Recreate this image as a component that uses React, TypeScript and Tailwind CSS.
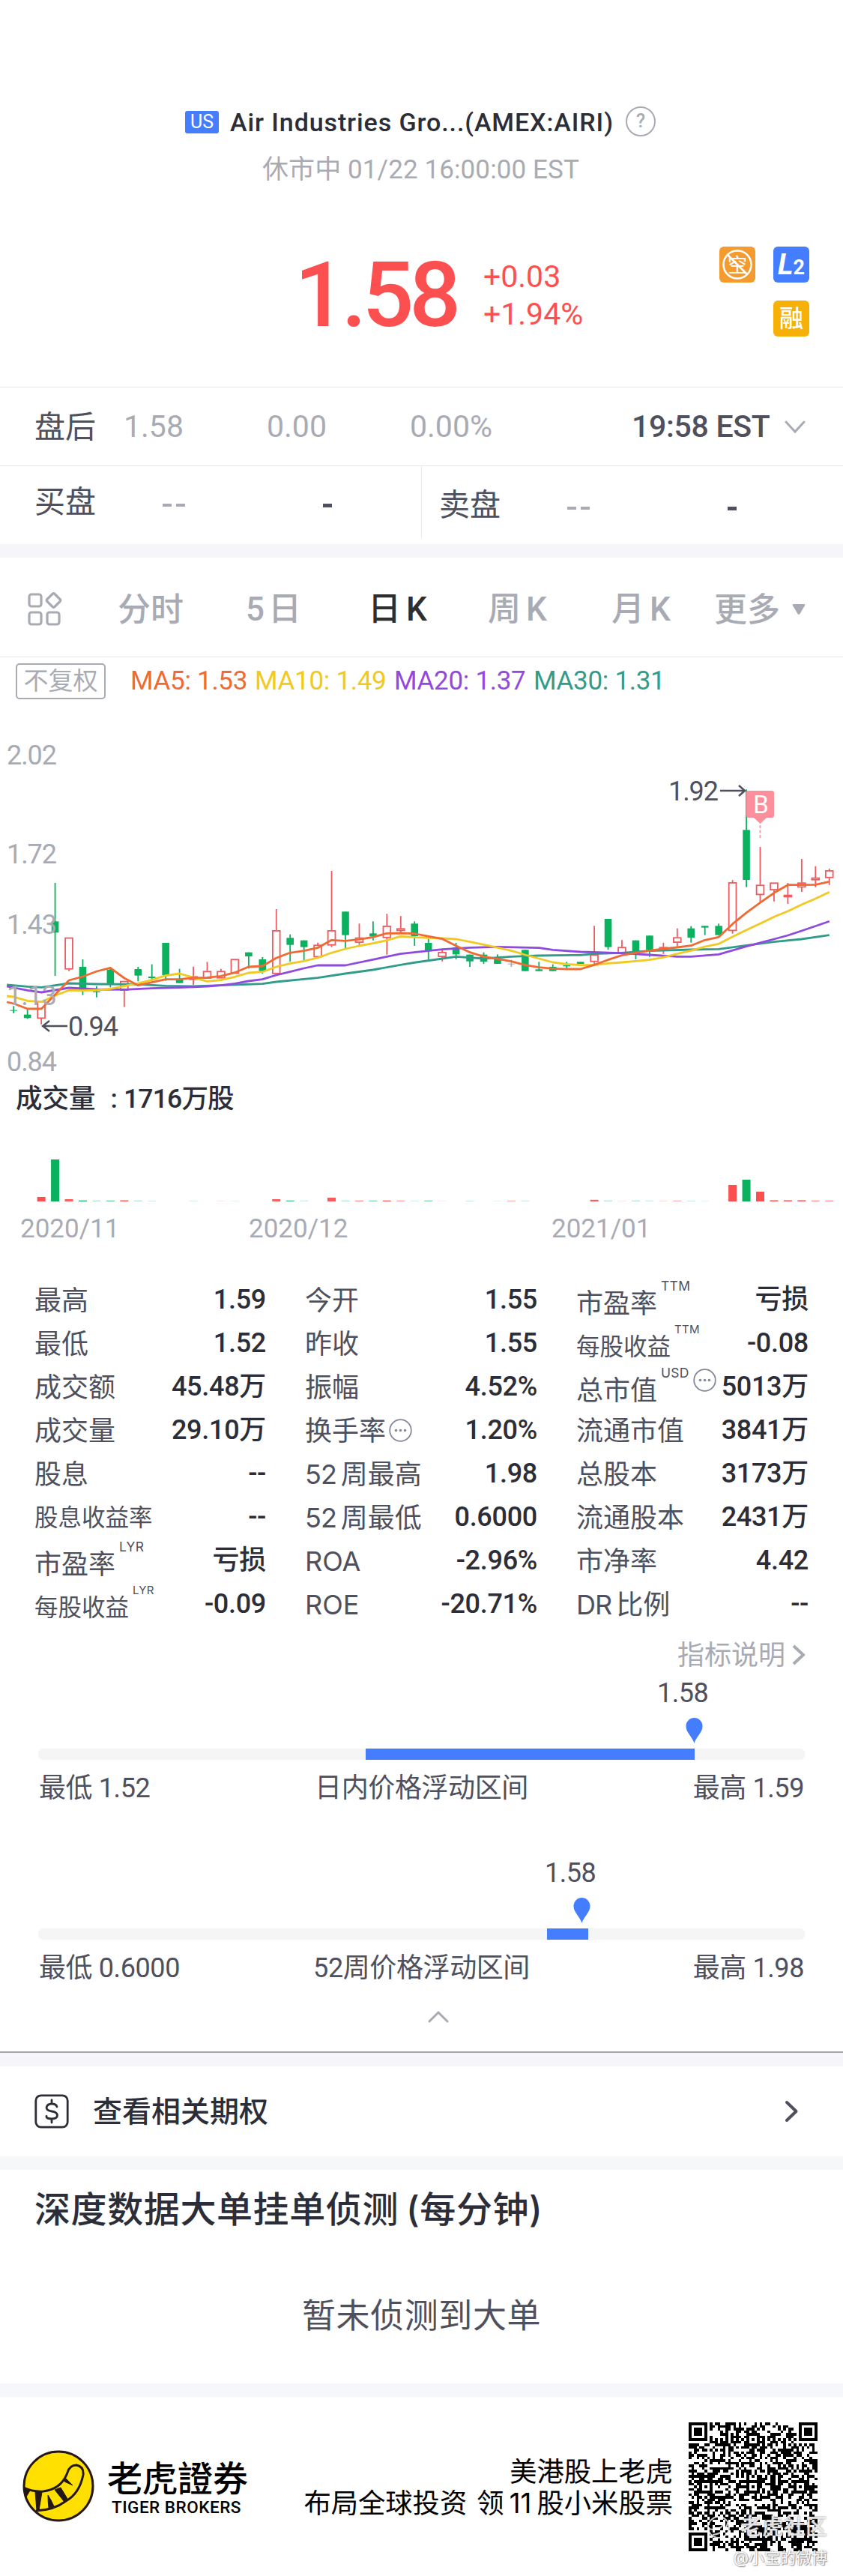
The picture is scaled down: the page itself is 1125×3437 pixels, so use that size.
import React from "react";

const DIN = "font-['Roboto','Noto_Sans_CJK_SC',sans-serif]";

/* ---------- price chart ---------- */

type Kind = "g" | "r" | "x";
// kind, body top, body bottom, wick top, wick bottom (thirds of a pixel)
type Candle = [Kind, number, number, number, number];

const candles: Candle[] = [
  ["g", 1163, 1166, 1147, 1176], ["g", 1181, 1195, 1160, 1198], ["r", 1128, 1197, 1128, 1220],
  ["g", 808, 853, 654, 1026], ["r", 873, 1000, 873, 1007], ["g", 990, 1086, 960, 1103],
  ["g", 1088, 1092, 1067, 1112], ["g", 1001, 1058, 992, 1072], ["r", 1047, 1085, 1047, 1151],
  ["g", 999, 1025, 990, 1048], ["g", 1029, 1035, 980, 1048], ["g", 894, 1023, 894, 1046],
  ["g", 1041, 1055, 998, 1055], ["r", 1028, 1042, 989, 1063], ["r", 1007, 1037, 970, 1037],
  ["r", 1007, 1036, 998, 1036], ["r", 959, 1017, 959, 1017], ["g", 932, 948, 932, 997],
  ["g", 960, 1007, 951, 1017], ["r", 844, 1018, 759, 1018], ["g", 874, 902, 860, 969],
  ["g", 884, 911, 884, 965], ["r", 902, 951, 893, 951], ["r", 844, 904, 606, 911],
  ["g", 769, 863, 769, 915], ["r", 873, 893, 817, 902], ["g", 856, 868, 808, 884],
  ["r", 826, 874, 778, 941], ["r", 836, 846, 787, 855], ["g", 817, 867, 808, 906],
  ["g", 894, 925, 878, 960], ["r", 931, 950, 920, 968], ["g", 912, 940, 894, 960],
  ["g", 941, 968, 941, 990], ["g", 941, 969, 932, 978], ["g", 955, 978, 940, 978],
  ["x", 977, 980, 962, 990], ["g", 922, 1007, 922, 1007], ["g", 1000, 1007, 970, 1007],
  ["g", 990, 1007, 980, 1007], ["g", 983, 988, 970, 995], ["g", 970, 978, 970, 978],
  ["r", 941, 970, 826, 980], ["g", 798, 911, 798, 921], ["r", 911, 935, 883, 935],
  ["g", 884, 930, 884, 960], ["g", 865, 922, 865, 950], ["r", 911, 918, 893, 938],
  ["r", 872, 893, 836, 908], ["g", 836, 873, 827, 893], ["g", 826, 833, 826, 863],
  ["g", 826, 863, 817, 863], ["r", 652, 846, 643, 857], ["g", 442, 642, 280, 671],
  ["r", 662, 702, 510, 730], ["r", 653, 683, 653, 728], ["r", 702, 711, 654, 738],
  ["r", 653, 672, 558, 690], ["r", 633, 643, 587, 671], ["r", 604, 634, 597, 662],
];

const cx = (i: number) => 18.2 + 18.45 * i;
const KX = 2.751;

const line = (left: number[], right: number[]) => {
  const out: string[] = [];
  for (let i = 0; i < left.length; i += 2) out.push(`${(left[i] / KX).toFixed(1)},${(left[i + 1] / 3).toFixed(1)}`);
  for (let i = 0; i < right.length; i += 2) out.push(`${(555 + right[i] / KX).toFixed(1)},${(right[i + 1] / 3).toFixed(1)}`);
  return out.join(" ");
};

const ma30 = line(
  [25, 1062, 101, 1069, 152, 1072, 253, 1056, 355, 1059, 507, 1060, 608, 1066, 710, 1068, 811, 1064, 963, 1058, 1014, 1050, 1166, 1034, 1268, 1017, 1369, 1002, 1470, 982],
  [0, 972, 97, 957, 148, 949, 249, 957, 350, 949, 452, 945, 604, 943, 655, 938, 756, 934, 858, 926, 1010, 921, 1112, 919, 1214, 904, 1315, 890, 1416, 879, 1518, 863],
);
const ma20 = line(
  [25, 1068, 101, 1084, 152, 1092, 203, 1083, 253, 1074, 355, 1080, 456, 1081, 558, 1076, 659, 1073, 760, 1068, 811, 1064, 862, 1057, 912, 1047, 963, 1040, 1014, 1023, 1064, 1010, 1115, 996, 1166, 984, 1268, 984, 1369, 961, 1470, 938],
  [0, 931, 97, 920, 199, 913, 300, 910, 452, 914, 503, 922, 604, 930, 756, 935, 858, 942, 959, 949, 1010, 949, 1112, 940, 1214, 908, 1315, 879, 1366, 864, 1416, 846, 1518, 808],
);
const ma10 = line(
  [25, 1107, 50, 1110, 101, 1126, 152, 1130, 203, 1105, 253, 1084, 304, 1085, 355, 1083, 405, 1078, 456, 1067, 507, 1056, 558, 1042, 608, 1025, 659, 1017, 710, 1033, 760, 1048, 811, 1043, 862, 1030, 912, 1014, 963, 1010, 1014, 990, 1064, 977, 1115, 967, 1166, 954, 1217, 934, 1268, 918, 1318, 906, 1369, 896, 1420, 884, 1470, 868, 1521, 871],
  [0, 872, 97, 876, 148, 879, 199, 890, 249, 901, 300, 913, 350, 925, 401, 942, 452, 957, 503, 972, 553, 979, 604, 983, 655, 983, 705, 976, 756, 972, 807, 967, 858, 962, 908, 952, 959, 938, 1010, 925, 1061, 909, 1112, 898, 1163, 869, 1214, 842, 1264, 817, 1315, 790, 1366, 767, 1416, 741, 1467, 717, 1518, 691],
);
const ma5 = line(
  [25, 1131, 50, 1137, 101, 1158, 152, 1158, 203, 1100, 253, 1044, 304, 1029, 355, 1008, 405, 994, 456, 1035, 507, 1064, 558, 1052, 608, 1040, 659, 1040, 710, 1034, 760, 1033, 811, 1027, 862, 1013, 912, 990, 963, 987, 1014, 955, 1064, 934, 1115, 926, 1166, 914, 1217, 883, 1268, 886, 1318, 880, 1369, 871, 1420, 856, 1470, 855, 1521, 857],
  [0, 858, 47, 868, 97, 878, 148, 906, 199, 932, 249, 949, 300, 958, 350, 968, 401, 983, 452, 992, 503, 997, 553, 999, 604, 999, 655, 982, 705, 962, 756, 944, 807, 934, 858, 925, 908, 918, 959, 912, 1010, 905, 1061, 883, 1112, 871, 1163, 818, 1214, 773, 1264, 733, 1315, 694, 1366, 662, 1416, 662, 1467, 661, 1518, 649],
);

const axis: [string, number][] = [["2.02", 60], ["1.72", 192], ["1.43", 286], ["1.13", 381], ["0.84", 469]];

function PriceChart() {
  return (
    <svg className="block" width="1125" height="480" viewBox="0 0 1125 480">
      {candles.map(([k, t, b, wt, wb], i) => {
        const x = cx(i);
        const top = t / 3;
        const bot = b / 3;
        if (k === "r") {
          return (
            <g key={i} stroke="#ef5b60" strokeWidth="1.8" fill="none">
              <path d={`M${x} ${wt / 3}V${top}M${x} ${bot}V${wb / 3}`} />
              <rect x={x - 4.9} y={top + 0.6} width="9.8" height={Math.max(bot - top - 1.2, 1.5)} />
            </g>
          );
        }
        const c = k === "g" ? "#0ab15f" : "#a9abb4";
        return (
          <g key={i} fill={c}>
            <rect x={x - 0.9} y={wt / 3} width="1.8" height={(wb - wt) / 3} />
            <rect x={x - 4.8} y={top} width="9.6" height={bot - top} />
          </g>
        );
      })}
      <g fill="none" strokeWidth="2.8" strokeLinejoin="round">
        <polyline points={ma30} stroke="#329c8b" />
        <polyline points={ma20} stroke="#8f4be0" />
        <polyline points={ma10} stroke="#f1c921" />
        <polyline points={ma5} stroke="#f06a33" />
      </g>
      <g className={DIN} fontSize="36" fill="#a9abb4">
        {axis.map(([t, y]) => (
          <text key={t} x="9" y={y} textLength="67">{t}</text>
        ))}
      </g>
      <g className={DIN} fontSize="36" fill="#4e505d">
        <text x="91" y="422" textLength="67">0.94</text>
        <text x="892" y="108" textLength="67">1.92</text>
      </g>
      <g fill="none" stroke="#4e505d" strokeWidth="2.4">
        <path d="M90 409H57M66 402L57 409L66 416" />
        <path d="M961 95H994M986 88L994 95L986 102" />
      </g>
      <path d="M1000 95h30q3 0 3 3v30q0 3-3 3h-7l-8.500 8l-8.500-8h-7q-3 0-3-3v-30q0-3 3-3z" fill="#fd8e9c" />
      <text x="1015.500" y="124.500" textAnchor="middle" className={DIN} fontSize="33" fill="#fff">B</text>
      <path d="M1014.500 141V158" stroke="#f3a5ae" strokeWidth="2" strokeDasharray="4 2.500" />
    </svg>
  );
}

/* ---------- volume ---------- */

const volumes: [number, Kind, number, number][] = [
  [2, "r", 6, 1], [3, "g", 56, 1], [4, "r", 3, 0.9], [5, "g", 1.3, 0.9], [6, "g", 1.3, 0.3], [7, "g", 1.3, 0.6],
  [8, "r", 1.5, 0.9], [9, "g", 1.3, 0.3], [10, "g", 0.7, 0.3], [13, "g", 1.3, 0.15], [15, "r", 1, 0.12], [16, "g", 1, 0.12],
  [19, "r", 3, 0.9], [20, "g", 1.3, 0.7], [21, "g", 1.3, 0.2], [23, "r", 5, 0.95], [24, "g", 1.3, 0.3], [25, "r", 1.3, 0.6],
  [26, "g", 1.3, 0.5], [27, "r", 1.3, 0.9], [28, "r", 1.3, 0.5], [29, "g", 1, 0.2], [30, "g", 1.3, 0.5], [31, "r", 1, 0.1],
  [33, "g", 1, 0.25], [35, "g", 1, 0.12], [36, "r", 1.3, 0.4], [37, "g", 1.3, 0.2], [42, "r", 2.2, 0.9], [43, "g", 1.3, 0.3],
  [44, "r", 1, 0.15], [45, "g", 1.3, 0.3], [46, "g", 1.3, 0.2], [47, "r", 1, 0.2], [48, "r", 1.3, 0.4], [49, "g", 1, 0.25],
  [50, "g", 1, 0.1], [52, "r", 22, 1], [53, "g", 29, 1], [54, "r", 13, 1], [55, "r", 1.6, 0.9], [56, "r", 1.6, 0.9],
  [57, "r", 1.6, 0.9], [58, "r", 1.3, 0.6], [59, "r", 1.3, 0.6],
];

function VolumeChart() {
  return (
    <svg className="block" width="1125" height="113" viewBox="0 0 1125 113">
      {volumes.map(([i, k, h, o]) => (
        <rect key={i} x={cx(i) - 5.5} y={113 - h} width="11" height={h} fill={k === "g" ? "#0ab15f" : "#fb4f50"} opacity={o} />
      ))}
    </svg>
  );
}

/* ---------- QR code ---------- */

function QrCode() {
  const n = 49;
  let seed = 20210122;
  const rnd = () => {
    seed = (Math.imul(seed, 1103515245) + 12345) & 0x7fffffff;
    return (seed >> 12) / (0x7fffffff >> 12);
  };
  const ring = (dx: number, dy: number) => Math.max(Math.abs(dx), Math.abs(dy));
  const finders = [[3, 3], [n - 4, 3], [3, n - 4]];
  const aligns = [[24, 6], [6, 24], [24, 24], [42, 24], [24, 42], [42, 42]];
  let d = "";
  for (let y = 0; y < n; y++) {
    for (let x = 0; x < n; x++) {
      let on = rnd() < 0.52;
      if (x === 6 || y === 6) on = (x + y) % 2 === 0;
      for (const [ax, ay] of aligns) {
        const r = ring(x - ax, y - ay);
        if (r <= 2) on = r !== 1;
      }
      for (const [fx, fy] of finders) {
        const r = ring(x - fx, y - fy);
        if (r <= 4) on = r === 3 || r <= 1;
      }
      if (on) d += `M${x} ${y}h1v1h-1z`;
    }
  }
  return (
    <svg className="block" width="172" height="172" viewBox="0 0 49 49" shapeRendering="crispEdges">
      <path d={d} fill="#000" />
    </svg>
  );
}

/* ---------- table ---------- */

function Dots() {
  return (
    <svg width="31" height="31" viewBox="0 0 31 31" className="shrink-0">
      <circle cx="15.500" cy="15.500" r="14.300" fill="none" stroke="#85889a" strokeWidth="1.800" />
      <circle cx="9.500" cy="15.500" r="1.800" fill="#85889a" />
      <circle cx="15.500" cy="15.500" r="1.800" fill="#85889a" />
      <circle cx="21.500" cy="15.500" r="1.800" fill="#85889a" />
    </svg>
  );
}

type Cell = { l: string; v: string; sup?: string; small?: boolean; dots?: boolean };

const columns: Cell[][] = [
  [
    { l: "最高", v: "1.59" }, { l: "最低", v: "1.52" }, { l: "成交额", v: "45.48万" }, { l: "成交量", v: "29.10万" },
    { l: "股息", v: "--" }, { l: "股息收益率", v: "--", small: true }, { l: "市盈率", v: "亏损", sup: "LYR" },
    { l: "每股收益", v: "-0.09", sup: "LYR", small: true },
  ],
  [
    { l: "今开", v: "1.55" }, { l: "昨收", v: "1.55" }, { l: "振幅", v: "4.52%" }, { l: "换手率", v: "1.20%", dots: true },
    { l: "52周最高", v: "1.98" }, { l: "52周最低", v: "0.6000" }, { l: "ROA", v: "-2.96%" }, { l: "ROE", v: "-20.71%" },
  ],
  [
    { l: "市盈率", v: "亏损", sup: "TTM" }, { l: "每股收益", v: "-0.08", sup: "TTM", small: true },
    { l: "总市值", v: "5013万", sup: "USD", dots: true }, { l: "流通市值", v: "3841万" }, { l: "总股本", v: "3173万" },
    { l: "流通股本", v: "2431万" }, { l: "市净率", v: "4.42" }, { l: "DR比例", v: "--" },
  ],
];

function Label({ l }: { l: string }) {
  const m = l.match(/^([A-Z0-9]+)(.+)$/);
  if (m && /[^A-Z]/.test(m[2])) {
    return (
      <>
        <span className="tracking-[-1px]">{m[1]}</span>
        <span className="ml-[6px]">{m[2]}</span>
      </>
    );
  }
  return <>{l}</>;
}

function Row({ c }: { c: Cell }) {
  return (
    <div className="flex h-[58px] items-center justify-between">
      <div className="flex items-center whitespace-nowrap text-[#4e505d]">
        <span
          className={
            (c.small ? "text-[31.500px]" : "text-[36px]") +
            (c.sup ? " relative top-[5px]" : " relative top-px") +
            " -ml-px leading-[50px]"
          }
        >
          <Label l={c.l} />
        </span>
        {c.sup && (
          <span className={(c.small ? "text-[15px]" : "text-[17.500px]") + " relative -top-[18px] ml-[5px] w-[37px] leading-[20px] tracking-[0.3px]"}>
            {c.sup}
          </span>
        )}
        {c.dots && (
          <span className={c.sup ? "relative -top-[9px] ml-[6px]" : "ml-[4px]"}>
            <Dots />
          </span>
        )}
      </div>
      <span className={DIN + " whitespace-nowrap text-[36px] font-medium leading-[50px] tracking-[-0.3px] text-[#2b2d38]"}>{c.v}</span>
    </div>
  );
}

/* ---------- price range ---------- */

function Range(p: { low: string; name: string; high: string; from: number; to: number; pin: number; label: number }) {
  return (
    <div className="px-[51px]">
      <div className="flex h-[40px] items-center">
        <span className={DIN + " text-[36px] leading-[40px] tracking-[-0.5px]"} style={{ marginLeft: p.label - 54 }}>1.58</span>
      </div>
      <svg className="mt-[13px] block" width="23" height="34" viewBox="0 0 23 34" style={{ marginLeft: p.pin - 62.5 }}>
        <path d="M11.500 34C9 25 0.500 20 0.500 11A11 11 0 0 1 22.500 11C22.500 20 14 25 11.500 34Z" fill="#447dfd" />
      </svg>
      <div className="mt-[7px] h-[15px] overflow-hidden rounded-[6px] bg-[#f5f5f5]">
        <div className="h-full bg-[#447dfd]" style={{ marginLeft: p.from - 51, width: p.to - p.from }} />
      </div>
      <div className={DIN + " mt-[14px] grid grid-cols-[1fr_auto_1fr] px-[1px] text-[36px] leading-[48px] tracking-[-0.4px]"}>
        <span>{p.low}</span>
        <span>{p.name}</span>
        <span className="text-right">{p.high}</span>
      </div>
    </div>
  );
}

/* ---------- page ---------- */

export default function App() {
  return (
    <div className="h-[3437px] w-[1125px] overflow-hidden bg-white font-['Inter','Noto_Sans_CJK_SC',sans-serif] text-[#4e505d]">
      {/* header */}
      <header className="h-[516px] pt-[133px]">
        <div className="flex h-[60px] items-center pl-[247px]">
          <span className={DIN + " flex h-[30px] w-[45px] items-center justify-center rounded-[3px] bg-[#447dfd] text-[25px] text-white"}>US</span>
          <span className={DIN + " ml-[15px] w-[528px] whitespace-nowrap text-[34px] font-medium tracking-[0.9px] text-[#2b2d38]"}>
            Air Industries Gro...(AMEX:AIRI)
          </span>
          <span className={DIN + " -mt-[2px] flex h-[40px] w-[40px] items-center justify-center rounded-full border-[2.5px] border-[#a9abb4] text-[25px] font-medium text-[#a9abb4]"}>?</span>
        </div>
        <div className={DIN + " mt-[14px] h-[40px] whitespace-nowrap pl-[350px] text-[35px] leading-[40px] tracking-[0.1px] text-[#a9abb4]"}>
          休市中 01/22 16:00:00 EST
        </div>
        <div className={DIN + " mt-[62px] flex h-[170px] items-center pl-[393px] pr-[45px] text-[#fb4f50]"}>
          <span className="w-[252px] text-[121px] font-medium leading-[120px] tracking-[-6px]">1.58</span>
          <div className="text-[41px] leading-[50px]">
            <div>+0.03</div>
            <div>+1.94%</div>
          </div>
          <div className="-mt-[10px] ml-auto grid grid-cols-2 gap-6">
            <svg width="48" height="48" viewBox="0 0 48 48">
              <rect width="48" height="48" rx="6" fill="#f49b30" />
              <text x="24" y="33.500" textAnchor="middle" fontSize="26" fill="#fff">空</text>
              <circle cx="24" cy="24" r="18.500" fill="none" stroke="#fff" strokeWidth="2.500" />
              <path d="M11 11L37 37" stroke="#fff" strokeWidth="2.500" />
            </svg>
            <div className="flex h-[48px] w-[48px] items-baseline justify-center rounded-[6px] bg-[#447dfd] font-bold italic text-white">
              <span className="text-[39px] leading-[48px]">L</span>
              <span className="text-[27px] not-italic leading-[48px]">2</span>
            </div>
            <div className="col-start-2 flex h-[48px] w-[48px] items-center justify-center rounded-[6px] bg-[#f7b008] text-[32px] font-medium text-white">融</div>
          </div>
        </div>
      </header>

      {/* after-hours */}
      <div className="flex h-[106px] items-center border-y border-[#e6e6ea] pl-[46px] pt-[2px]">
        <span className="w-[119px] text-[41px]">盘后</span>
        <span className={DIN + " w-[191px] text-[41px] text-[#a9abb4]"}>1.58</span>
        <span className={DIN + " w-[191px] text-[41px] text-[#a9abb4]"}>0.00</span>
        <span className={DIN + " w-[296px] text-[41px] text-[#a9abb4]"}>0.00%</span>
        <span className={DIN + " w-[204px] whitespace-nowrap text-[41px] font-medium tracking-[-0.3px]"}>19:58 EST</span>
        <svg width="28" height="18" viewBox="0 0 28 18" fill="none" stroke="#a9abb4" strokeWidth="3" strokeLinecap="round">
          <path d="M2 2L14 15L26 2" />
        </svg>
      </div>
      <div className="flex h-[104px]">
        <div className="flex h-[96px] w-[563px] items-center border-r border-[#ececf0] pl-[46px] text-[41px]">
          <span className="w-[171px]">买盘</span>
          <span className="w-[214px] text-[#a9abb4]">
            <span className="flex gap-[6px] pt-[8px]"><i className="h-[4px] w-[12px] bg-[#a9abb4]" /><i className="h-[4px] w-[12px] bg-[#a9abb4]" /></span>
          </span>
          <i className="mt-[8px] h-[5px] w-[12px] bg-[#4e505d]" />
        </div>
        <div className="flex h-[104px] flex-1 items-center pl-[23px] text-[41px]">
          <span className="w-[171px]">卖盘</span>
          <span className="w-[214px]">
            <span className="flex gap-[6px] pt-[8px]"><i className="h-[4px] w-[12px] bg-[#a9abb4]" /><i className="h-[4px] w-[12px] bg-[#a9abb4]" /></span>
          </span>
          <i className="mt-[8px] h-[5px] w-[12px] bg-[#4e505d]" />
        </div>
      </div>
      <div className="h-[18px] bg-[#f5f5fa]" />

      {/* tabs */}
      <nav className="flex h-[133px] items-center whitespace-nowrap border-b border-[#e6e6ea] pl-[37px] pt-[6px] text-[44px] font-medium text-[#a9abb4]">
        <svg width="46" height="46" viewBox="0 0 46 46" fill="none" stroke="#a9abb4" strokeWidth="3.200" className="mr-[74px]">
          <rect x="2" y="3" width="16" height="16" rx="3" />
          <rect x="2" y="27" width="16" height="16" rx="3" />
          <rect x="26" y="27" width="16" height="16" rx="3" />
          <path d="M33 2.500Q34.500 1 36 2.500L43 9.500Q44.500 11 43 12.500L36 19.500Q34.500 21 33 19.500L26 12.500Q24.500 11 26 9.500Z" />
        </svg>
        <span className="w-[171px]">分时</span>
        <span className={DIN + " w-[163px]"}>5<span className="ml-[5px]">日</span></span>
        <span className={DIN + " w-[160px] text-[#2e2e30]"}>日<span className="ml-[7px]">K</span></span>
        <span className={DIN + " w-[165px]"}>周<span className="ml-[7px]">K</span></span>
        <span className={DIN + " w-[137px]"}>月<span className="ml-[7px]">K</span></span>
        <span className="w-[104px]">更多</span>
        <svg width="18" height="14" viewBox="0 0 18 14"><path d="M2 0H16Q18 0 17 2L10.500 13Q9 15 7.500 13L1 2Q0 0 2 0Z" fill="#a9abb4" /></svg>
      </nav>

      {/* moving averages */}
      <div className="flex h-[83px] items-start pl-[21px] pt-[8px]">
        <span className="flex h-[48px] w-[120px] items-center justify-center rounded-[5px] border-[2.5px] border-[#a9abb4] text-[33px] text-[#a9abb4]">不复权</span>
        <div className={DIN + " ml-[33px] flex whitespace-nowrap pt-[1px] text-[35px] leading-[46px] tracking-[-0.3px]"}>
          <span className="w-[166px] text-[#f06a33]">MA5: 1.53</span>
          <span className="w-[186px] text-[#f1c921]">MA10: 1.49</span>
          <span className="w-[186px] text-[#9548e0]">MA20: 1.37</span>
          <span className="text-[#329c8b]">MA30: 1.31</span>
        </div>
      </div>

      <PriceChart />
      <div className={DIN + " flex h-[50px] items-center whitespace-nowrap pl-[21px] pt-[3px] text-[35.500px] font-medium text-[#2b2d38]"}>
        成交量<span className="ml-[20px] mr-[8px]">:</span><span className="tracking-[-0.8px]">1716万股</span>
      </div>
      <VolumeChart />
      <div className={DIN + " mt-[14px] flex h-[46px] items-center pl-[27px] text-[35px] text-[#a9abb4]"}>
        <span className="w-[305px]">2020/11</span>
        <span className="w-[404px]">2020/12</span>
        <span>2021/01</span>
      </div>

      {/* key figures */}
      <section className="mt-[42px] grid grid-cols-[308px_309px_309px] gap-x-[53px] pl-[47px]">
        {columns.map((col, i) => (
          <div key={i}>
            {col.map((c) => (
              <Row key={c.l + (c.sup ?? "")} c={c} />
            ))}
          </div>
        ))}
      </section>
      <div className="flex h-[70px] items-center justify-end pr-[50px] pt-[7px] text-[36px] text-[#a9abb4]">
        指标说明
        <svg className="ml-[9px]" width="18" height="28" viewBox="0 0 18 28" fill="none" stroke="#a9abb4" strokeWidth="4">
          <path d="M2 2L15 14L2 26" />
        </svg>
      </div>

      {/* ranges */}
      <div className="grid gap-[69px]">
        <Range low="最低 1.52" name="日内价格浮动区间" high="最高 1.59" from={488} to={927} pin={926} label={880} />
        <Range low="最低 0.6000" name="52周价格浮动区间" high="最高 1.98" from={730} to={785} pin={776.5} label={730} />
      </div>
      <div className="mt-[32px] flex h-[18px] pl-[571px]">
        <svg width="28" height="18" viewBox="0 0 28 18" fill="none" stroke="#a9abb4" strokeWidth="3" strokeLinecap="round">
          <path d="M2 15L14 3L26 15" />
        </svg>
      </div>
      <div className="mt-[37px] h-[20px] border-t-2 border-[#a6a6ab] bg-[#f5f5fa]" />

      {/* options link */}
      <div className="flex h-[120px] items-center pl-[46px] pr-[59px] text-[39px] font-medium text-[#2b2d38]">
        <svg width="46" height="46" viewBox="0 0 46 46" fill="none" stroke="#2b2d38" strokeWidth="2.800" strokeLinecap="round">
          <rect x="1.800" y="1.800" width="42.400" height="42.400" rx="7" />
          <path d="M30 17Q29 13 23 13T16 18Q16 22 23 23T30.500 28Q30.500 33 23 33T16 29.500M23 8V13M23 33V38" />
        </svg>
        <span className="ml-[32px]">查看相关期权</span>
        <svg className="ml-auto" width="19" height="30" viewBox="0 0 19 30" fill="none" stroke="#4e505d" strokeWidth="4" strokeLinecap="round" strokeLinejoin="round">
          <path d="M3 3L15.500 15L3 27" />
        </svg>
      </div>
      <div className="h-[18px] bg-[#f6f7f9]" />

      {/* order detection */}
      <section className="h-[285px]">
        <h2 className="whitespace-nowrap pl-[46px] pt-[20px] text-[48px] font-medium leading-[66px] tracking-[0.6px] text-[#2b2d38]">
          深度数据大单挂单侦测<span className="ml-[10px]">(每分钟)</span>
        </h2>
        <p className="pt-[76px] text-center text-[45px] leading-[66px] tracking-[0.6px]">暂未侦测到大单</p>
      </section>
      <div className="h-[18px] bg-[#f6f7fa]" />

      {/* footer */}
      <footer className="relative flex h-[240px] pl-[30px] text-black">
        <svg className="mt-[71px]" width="96" height="96" viewBox="0 0 96 96">
          <defs>
            <clipPath id="coin"><circle cx="48" cy="48" r="46" /></clipPath>
          </defs>
          <circle cx="48" cy="48" r="46" fill="#ffe000" />
          <g clipPath="url(#coin)" stroke="#231815" strokeLinejoin="round">
            <path d="M1 50Q14 56 28 55Q52 52 60 30Q63 20 72 20Q82 22 81 33Q76 58 58 68Q42 80 18 81" fill="none" strokeWidth="3" />
            <path d="M1 51L10 54L4 64Z M17 56L26 56L22 80L19 80Z M34 60Q38 66 42 75L35 77Q34 68 34 60Z M43 53L51 50L60 65L55 68Z M56 42L67 47L57 37Z" fill="#231815" strokeWidth="1" />
          </g>
          <circle cx="48" cy="48" r="46" fill="none" stroke="#231815" strokeWidth="3" />
        </svg>
        <div className="ml-[17px] mt-[78px] w-[200px]">
          <div className="font-['Noto_Sans_CJK_TC',sans-serif] text-[47px] font-medium leading-[56px]">老虎證券</div>
          <div className={DIN + " ml-[6px] whitespace-nowrap text-[22.500px] font-medium leading-[26px] tracking-[0.5px]"}>TIGER BROKERS</div>
        </div>
        <div className="mt-[79px] flex-1 whitespace-nowrap text-right text-[36.300px] leading-[42px]">
          <div>美港股上老虎</div>
          <div>
            布局全球投资<span className="ml-[13px]">领</span><span className="inline-block w-[44px] text-center">11</span>股小米股票
          </div>
        </div>
        <div className="ml-[21px] mr-[34px] mt-[34px]">
          <QrCode />
        </div>
        <div className="absolute right-[21px] top-[156px] flex items-center gap-[13px] text-[29px] font-medium leading-[36px] text-white/80 [text-shadow:0_0_2px_#777]">
          <svg width="32" height="32" viewBox="0 0 32 32" fill="none" stroke="#fff" strokeOpacity=".8" strokeWidth="2">
            <circle cx="16" cy="16" r="14" />
            <path d="M3 18Q20 22 24 8M8 26Q26 24 28 10" />
          </svg>
          老虎社区
        </div>
        <div className="absolute right-[21px] top-[202px] text-[21px] leading-[26px] text-white [text-shadow:0_0_2px_#777,1px_1px_1px_#999]">@小宝的微博</div>
      </footer>
    </div>
  );
}
